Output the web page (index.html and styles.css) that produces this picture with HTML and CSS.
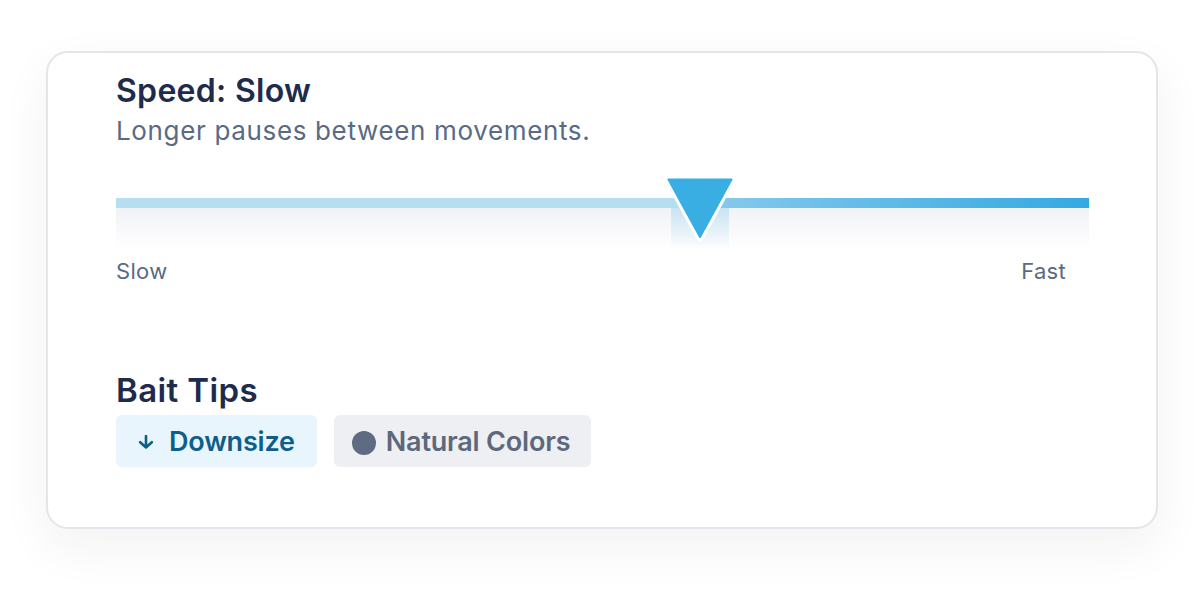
FILE: index.html
```html
<!DOCTYPE html>
<html lang="en">
<head>
    <meta charset="UTF-8">
    <meta name="viewport" content="width=device-width, initial-scale=1.0">
    <title>Retrieve Settings</title>
    <link rel="stylesheet" href="styles.css">
</head>

<body>
    <div class="card">
        <section class="speed">
            <h2 class="title">Speed: Slow</h2>
            <p class="hint">Longer pauses between movements.</p>

            <div class="slider">
                <div class="track">
                    <div class="track-fill" style="width:60%;"></div>
                    <div class="track-rest"></div>
                </div>
                <div class="track-fade"></div>
                <div class="thumb" style="left:60%;">
                    <div class="thumb-glow"></div>
                    <svg class="thumb-arrow" viewBox="0 0 66 63" width="66" height="63">
                        <!-- white outline behind, blue pointer on top -->
                        <path d="M1.5 1.5 L64.5 1.5 L33 59 Z" fill="none" stroke="#ffffff" stroke-width="8" stroke-linejoin="round"/>
                        <path d="M1.5 1.5 L64.5 1.5 L33 59 Z" fill="#38aee3" stroke="#38aee3" stroke-width="2" stroke-linejoin="round"/>
                    </svg>
                </div>
            </div>

            <div class="scale">
                <span>Slow</span>
                <span>Fast</span>
            </div>
        </section>

        <section class="tips">
            <h2 class="title title-lg">Bait Tips</h2>
            <div class="chips">
                <span class="chip chip-blue">
                    <svg class="chip-icon" viewBox="0 0 16 14" width="16" height="14">
                        <path d="M8 1 V12.5 M2.2 7.2 L8 12.5 L13.8 7.2" fill="none" stroke="currentColor" stroke-width="2.6" stroke-linecap="round" stroke-linejoin="round"/>
                    </svg>
                    Downsize
                </span>
                <span class="chip chip-gray">
                    <span class="dot"></span>
                    Natural Colors
                </span>
            </div>
        </section>
    </div>
</body>
</html>
```

FILE: styles.css
```css
body {
    margin: 0;
    min-height: 600px;
    font-family: Inter, "Noto Sans", sans-serif;
    background-color: #ffffff;
}
.card {
    box-sizing: border-box;
    width: 1112px;
    height: 478px;
    margin: 51px 0 0 46px;
    padding: 19px 67px 0 68px;
    background-color: white;
    border: 2px solid #e3e5ea;
    border-radius: 22px;
    box-shadow: 0px 18px 50px rgba(30, 40, 70, 0.06);
}
.title {
    margin: 0;
    font-size: 32px;
    line-height: 38px;
    font-weight: 600;
    letter-spacing: 0.3px;
    color: #1f2b4d;
}
.title-lg {
    font-size: 33px;
    letter-spacing: 0.4px;
}
.hint {
    margin: 5px 0 0;
    font-size: 26px;
    line-height: 32px;
    letter-spacing: 0.65px;
    color: #5a6a84;
}

/* slider */
.slider {
    position: relative;
    margin-top: 51px;
}
.track {
    display: flex;
    height: 10px;
}
.track-fill {
    background-color: #b6def1;
}
.track-rest {
    flex: 1;
    background: linear-gradient(to right, #88caed, #34a9e1);
}
.track-fade {
    height: 42px;
    background: linear-gradient(to bottom, #f1f2f6, #ffffff);
}
.thumb {
    position: absolute;
    top: -20px;
    width: 66px;
    height: 72px;
    transform: translateX(-50%);
}
.thumb-glow {
    position: absolute;
    left: 4px;
    right: 4px;
    top: 30px;
    bottom: 0;
    background: linear-gradient(to bottom, rgba(56, 174, 227, 0.22), rgba(56, 174, 227, 0));
}
.thumb-arrow {
    position: relative;
    display: block;
    overflow: visible;
}
.scale {
    display: flex;
    justify-content: space-between;
    margin-top: 7px;
    padding-right: 23px;
    font-size: 22px;
    line-height: 28px;
    letter-spacing: 0.3px;
    color: #5a6a84;
}

/* tips */
.tips {
    margin-top: 86px;
}
.chips {
    display: flex;
    gap: 17px;
    margin-top: 6px;
}
.chip {
    display: flex;
    align-items: center;
    height: 52px;
    border-radius: 6px;
    font-size: 27px;
    font-weight: 600;
    letter-spacing: -0.2px;
}
.chip-blue {
    padding: 0 22px 0 22px;
    gap: 15px;
    background-color: #e9f5fc;
    color: #0e5e8c;
}
.chip-icon {
    display: block;
    margin-top: 2px;
}
.chip-gray {
    padding: 0 21px 0 18px;
    gap: 10px;
    background-color: #eeeff2;
    color: #5d687b;
}
.dot {
    width: 24px;
    height: 24px;
    margin-top: 4px;
    border-radius: 50%;
    background-color: #5f6b82;
}
```
